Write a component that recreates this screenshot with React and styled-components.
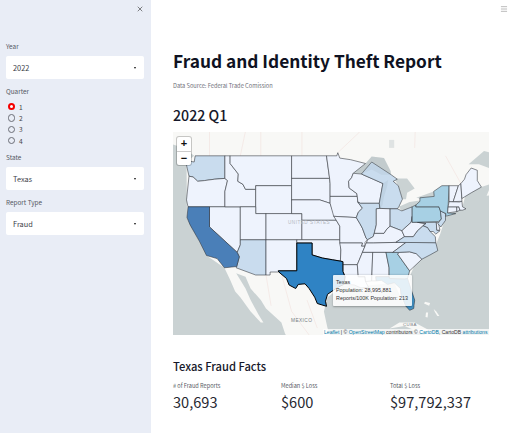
import React from "react";
import styled, { createGlobalStyle } from "styled-components";
import { X, Menu } from "lucide-react";

const font = `"Noto Sans CJK JP", "Noto Sans", sans-serif`;

const Global = createGlobalStyle`
  html, body { margin: 0; padding: 0; background: #fff; }
  body { font-family: ${font}; color: #262730; }
  #root { width: 512px; height: 433px; overflow: hidden; }
`;

const Page = styled.div`
  display: flex;
  width: 512px;
  height: 433px;
  overflow: hidden;
`;

const Sidebar = styled.aside`
  width: 151px;
  flex: none;
  box-sizing: border-box;
  background: #e9edf6;
  padding: 5px 7px 0 6px;
  display: flex;
  flex-direction: column;
`;

const CloseRow = styled.div`
  display: flex;
  justify-content: flex-end;
  height: 37px;
  color: #333;
`;

const Field = styled.div`
  display: flex;
  flex-direction: column;
  margin-bottom: ${(p) => p.$gap || 8}px;
`;

const Label = styled.div`
  font-size: 6.4px;
  line-height: 10px;
  height: 10px;
  color: #555863;
  margin-bottom: 4px;
`;

const Select = styled.div`
  height: 23px;
  background: #fff;
  border-radius: 2px;
  display: flex;
  align-items: center;
  justify-content: space-between;
  padding: 0 8px 0 7px;
  font-size: 7.4px;
  color: #3a3c47;
`;

const Caret = styled.span`
  width: 0;
  height: 0;
  border-left: 1.8px solid transparent;
  border-right: 1.8px solid transparent;
  border-top: 2px solid #111;
`;

const RadioGroup = styled.div`
  display: flex;
  flex-direction: column;
  gap: 4.4px;
  padding: 2px 0 0 1.5px;
`;

const RadioRow = styled.div`
  display: flex;
  align-items: center;
  gap: 4px;
  height: 7px;
  font-size: 6.6px;
  color: #444;
`;

const RadioDot = styled.span`
  box-sizing: border-box;
  width: 7.4px;
  height: 7.4px;
  border-radius: 50%;
  background: ${(p) => (p.$on ? "#fff" : "transparent")};
  border: ${(p) => (p.$on ? "2.2px solid #f40000" : "0.7px solid #6b6d76")};
`;

const Main = styled.main`
  flex: 1;
  position: relative;
  box-sizing: border-box;
  padding: 47px 23px 0 22px;
  min-width: 0;
`;

const HamburgerSlot = styled.div`
  position: absolute;
  top: 5px;
  right: 4px;
  color: #9a9a9a;
  display: flex;
`;

const Title = styled.h1`
  margin: 0;
  font-size: 17.3px;
  line-height: 28px;
  font-weight: 700;
  color: #0f1222;
  white-space: nowrap;
`;

const Caption = styled.p`
  margin: 6px 0 0;
  font-size: 5.7px;
  line-height: 10px;
  color: #6f717b;
`;

const Heading = styled.h2`
  margin: 13px 0 6px;
  font-size: 14.2px;
  line-height: 22px;
  font-weight: 500;
  color: #16182a;
`;

const MapFrame = styled.div`
  position: relative;
  width: 316px;
  height: 203px;
  overflow: hidden;
  background: #cad2d3;
`;

const MapSvg = styled.svg`
  display: block;
  font-family: "Liberation Sans", sans-serif;
`;

const ZoomControl = styled.div`
  position: absolute;
  left: 4px;
  top: 5px;
  width: 14px;
  display: flex;
  flex-direction: column;
  background: #fff;
  border-radius: 2px;
  box-shadow: 0 0 0 1px rgba(0, 0, 0, 0.2);
`;

const ZoomButton = styled.div`
  height: 13.5px;
  display: flex;
  align-items: center;
  justify-content: center;
  font-family: "Liberation Sans", sans-serif;
  font-size: 11px;
  font-weight: 700;
  color: #111;
  line-height: 1;
  border-bottom: ${(p) => (p.$last ? "none" : "0.5px solid #ccc")};
`;

const Tooltip = styled.div`
  position: absolute;
  left: 160px;
  top: 143px;
  width: 79px;
  height: 31px;
  box-sizing: border-box;
  padding: 3px 3px;
  background: rgba(255, 255, 255, 0.86);
  box-shadow: 0 0.5px 2px rgba(0, 0, 0, 0.3);
  border-radius: 1px;
  font-family: "Liberation Sans", sans-serif;
  font-size: 5.4px;
  line-height: 8.2px;
  color: #333;
  white-space: nowrap;
`;

const Attribution = styled.div`
  position: absolute;
  right: 0;
  bottom: 0;
  padding: 0 1.5px;
  height: 6.5px;
  line-height: 6.5px;
  background: rgba(255, 255, 255, 0.75);
  font-family: "Liberation Sans", sans-serif;
  font-size: 5.1px;
  color: #333;
  white-space: nowrap;
`;

const AttrLink = styled.span`
  color: #0078a8;
`;

const SubHeading = styled.h3`
  margin: 22px 0 6px;
  font-size: 11.2px;
  line-height: 18px;
  font-weight: 500;
  color: #16182a;
`;

const Metrics = styled.div`
  display: grid;
  grid-template-columns: 108px 109px 1fr;
`;

const Metric = styled.div`
  display: flex;
  flex-direction: column;
`;

const MetricLabel = styled.div`
  font-size: 5.6px;
  line-height: 10px;
  color: #555863;
`;

const MetricValue = styled.div`
  font-size: 14.6px;
  line-height: 22px;
  color: #262730;
`;

/* ---- map drawing ---- */
const merc = (lat) => Math.log(Math.tan(Math.PI / 4 + (lat * Math.PI) / 360));
const px = (lon, lat) => [
  (188 + (lon + 124.2) * 5.13 - 173).toFixed(1),
  (155 + (0.9865 - merc(lat)) * 292 - 132).toFixed(1),
];
const path = (s) => {
  const n = s.trim().split(/[\s;]+/).map((p) => p.split(",").map(Number));
  return "M" + n.map(([a, b]) => px(a, b).join(" ")).join("L") + "Z";
};

const BASE = "#eef3fd";
const LIGHT = "#c9dcee";
const MID = "#a7d0e4";

const STATES = [
  ["WA", LIGHT, "-124.7,48.4 -123,48.2 -122.8,49 -117,49 -117,46 -119,45.9 -121,45.7 -122.3,45.6 -123.2,46.2 -124,46.3"],
  ["OR", BASE, "-124.2,42 -120,42 -117,42 -117,44.2 -116.5,45.7 -117,46 -119,45.9 -121,45.7 -122.3,45.6 -123.2,46.2 -124,46.3 -124.5,43"],
  ["NV", BASE, "-120,42 -114,42 -114,36.2 -114.6,35 -120,39"],
  ["ID", BASE, "-117,49 -116,49 -116,48 -114.4,46.6 -114.5,45.6 -113.5,45.2 -113,44.5 -111,44.5 -111,42 -117,42 -117,44.2 -116.5,45.7 -117,46"],
  ["MT", BASE, "-116,49 -104,49 -104,45 -111,45 -111,44.5 -113,44.5 -113.5,45.2 -114.5,45.6 -114.4,46.6 -116,48"],
  ["WY", BASE, "-111,45 -104,45 -104,41 -111,41"],
  ["UT", BASE, "-114,42 -111,42 -111,41 -109,41 -109,37 -114,37"],
  ["CO", BASE, "-109,41 -102,41 -102,37 -109,37"],
  ["AZ", LIGHT, "-114,37 -109,37 -109,31.3 -111,31.3 -114.8,32.5 -114.7,32.7 -114.2,34.3 -114.6,35 -114,36.2"],
  ["NM", BASE, "-109,37 -103,37 -103,32 -106.6,32 -106.5,31.8 -108.2,31.8 -108.2,31.3 -109,31.3"],
  ["ND", BASE, "-104,49 -97.2,49 -96.6,46 -104,46"],
  ["SD", BASE, "-104,46 -96.6,46 -96.5,45.3 -96.5,42.5 -98.5,43 -104,43"],
  ["NE", BASE, "-104,43 -98.5,43 -96.5,42.5 -95.3,40 -102,40 -102,41 -104,41"],
  ["KS", BASE, "-102,40 -95.3,40 -94.6,39.1 -94.6,37 -102,37"],
  ["OK", BASE, "-103,37 -94.6,37 -94.4,35.4 -94.5,33.6 -96,33.8 -98,34.1 -100,34.6 -100,36.5 -103,36.5"],
  ["MN", BASE, "-97.2,49 -95.2,49 -95,49.4 -94.6,48.7 -92.5,48.5 -89.6,48 -92,46.7 -92.3,46.1 -92.9,45.6 -92.8,44.7 -91.3,43.9 -91.2,43.5 -96.5,43.5 -96.5,45.3 -96.6,46"],
  ["IA", BASE, "-96.5,43.5 -91.2,43.5 -91.1,42.7 -90.2,41.8 -91,41.2 -91.4,40.4 -95.8,40.6 -96.5,42.5"],
  ["MO", BASE, "-95.8,40.6 -91.4,40.4 -90.7,39.5 -90.2,38.8 -89.5,37.3 -89.2,37 -89.7,36.6 -89.7,36 -90.4,36 -90.2,36.5 -94.6,36.5 -94.6,39.1 -95.3,40"],
  ["AR", BASE, "-94.6,36.5 -90.2,36.5 -90.4,36 -89.7,36 -91.2,33 -94,33 -94,33.5 -94.5,33.6 -94.4,35.4"],
  ["LA", BASE, "-94,33 -91.2,33 -91,31 -89.7,31 -89.6,30.2 -89,29.2 -90.5,29.1 -91.8,29.6 -93.8,29.7 -93.6,31 -94,31.9"],
  ["WI", BASE, "-92,46.7 -90.4,46.6 -88.1,45.9 -86.2,45.3 -86.9,42.5 -90.6,42.5 -91.1,42.7 -91.2,43.5 -91.3,43.9 -92.8,44.7 -92.9,45.6 -92.3,46.1"],
  ["IL", LIGHT, "-90.6,42.5 -86.9,42.5 -86.8,41.76 -87.5,41.7 -87.5,39.3 -87.9,38 -88.1,37.5 -89.2,37 -89.5,37.3 -90.2,38.8 -90.7,39.5 -91.4,40.4 -91,41.2 -90.2,41.8 -91.1,42.7"],
  ["MI", LIGHT, "-90.4,46.6 -88.4,48.2 -84.6,46.5 -83.4,45.9 -84.2,45.6 -83.2,45 -82.4,43.1 -83.1,42 -83.4,41.7 -84.8,41.7 -86.8,41.76 -86.9,42.5 -86.2,45.3 -88.1,45.9"],
  ["IN", BASE, "-87.5,41.7 -86.8,41.76 -84.8,41.7 -84.8,39.1 -85.4,38.7 -86,38 -87.9,38 -87.5,39.3"],
  ["OH", LIGHT, "-84.8,41.7 -83.4,41.7 -82.5,41.4 -80.5,42 -80.5,40.6 -80.7,39.7 -81.7,39 -82.5,38.4 -84.8,39.1"],
  ["KY", BASE, "-89.4,36.5 -88,36.5 -83.7,36.6 -82,37.5 -82.5,38.4 -84.8,39.1 -85.4,38.7 -86,38 -87.9,38 -88.1,37.5 -89.2,37"],
  ["TN", BASE, "-90.2,35 -88.2,35 -84.3,35 -81.7,36.6 -83.7,36.6 -88,36.5 -89.5,36.5 -89.7,36"],
  ["MS", BASE, "-90.2,35 -88.2,35 -88.4,30.3 -89.6,30.2 -89.7,31 -91,31 -91.2,33"],
  ["AL", BASE, "-88.2,35 -85.6,35 -85,32.5 -85,31 -87.6,31 -87.5,30.3 -88.4,30.3"],
  ["GA", MID, "-85.6,35 -83.1,35 -83.3,34.7 -81,32 -81.4,30.7 -82,30.6 -84.9,30.7 -85,31 -85,32.5"],
  ["SC", BASE, "-83.1,35 -81,35.1 -79.7,34.8 -78.6,33.9 -81,32 -83.3,34.7"],
  ["NC", LIGHT, "-84.3,35 -83.1,35 -81,35.1 -79.7,34.8 -78.6,33.9 -77,34.6 -75.5,35.3 -75.9,36.55 -81.7,36.6"],
  ["VA", LIGHT, "-83.7,36.6 -75.9,36.55 -76,37.5 -77,38.3 -77.5,38.9 -78.4,39.2 -79.5,38.4 -80.3,37.5 -82,37.5"],
  ["WV", BASE, "-82,37.5 -80.3,37.5 -79.5,38.4 -78.4,39.2 -77.8,39.5 -79.5,39.7 -80.5,39.7 -80.5,40.6 -80.7,39.7 -81.7,39 -82.5,38.4"],
  ["MD", LIGHT, "-79.5,39.7 -75.8,39.7 -75.7,38.5 -75.1,38.4 -75.9,37.9 -76.4,38.3 -77,38.3 -77.5,38.9 -78.4,39.2 -77.8,39.5"],
  ["DE", BASE, "-75.8,39.7 -75.4,39.7 -75.1,38.5 -75.7,38.5"],
  ["PA", MID, "-80.5,42 -79.76,42.27 -79.8,42 -75.3,42 -75,41.4 -74.8,40.2 -75.4,39.8 -80.5,39.7"],
  ["NJ", LIGHT, "-75,41.4 -74,41 -74,40 -74.9,39 -75.5,39.5 -74.8,40.2"],
  ["NY", MID, "-79.8,42 -75.3,42 -75,41.4 -73.9,41 -74,40.6 -72,41 -73.6,41.1 -73.5,42 -73.3,45 -74.7,45 -76.3,44.2 -76.2,43.5 -79,43.3 -79,42.8 -79.76,42.27"],
  ["CT", BASE, "-73.6,41.1 -73.5,42 -71.8,42 -71.8,41.3"],
  ["RI", BASE, "-71.8,42 -71.4,42 -71.2,41.5 -71.8,41.3"],
  ["MA", BASE, "-73.5,42 -73.3,42.75 -71.3,42.7 -70.8,42.8 -70.7,42 -70,41.7 -70.7,41.5 -71.2,41.5 -71.4,42"],
  ["VT", BASE, "-73.3,42.75 -72.5,42.75 -71.5,45 -73.3,45"],
  ["NH", BASE, "-72.5,42.75 -70.8,42.8 -71,45.3 -71.5,45"],
  ["ME", BASE, "-71,45.3 -70.8,43.2 -69,44 -67,44.8 -67.8,45.7 -67.8,47.1 -69,47.4 -70,46.5 -70.3,45.9"],
  ["CA", "#4a7fb8", "-124.2,42 -120,42 -120,39 -114.6,35 -114.2,34.3 -114.7,32.7 -117.1,32.5 -118.5,34 -120.6,34.5 -122,36.8 -123.8,39.3 -124.4,40.4"],
  ["FL", "#4292c6", "-87.6,31 -85,31 -84.9,30.7 -82,30.6 -81.4,30.7 -80,27 -80.2,25.5 -81,25.2 -81.8,26 -82.7,28 -82.8,29 -84,30 -85.3,29.7 -86.5,30.4 -87.5,30.3"],
];

const TEXAS = "-106.6,32 -103,32 -103,36.5 -100,36.5 -100,34.6 -98,34.1 -96,33.8 -94.5,33.6 -94,33.5 -94,31.9 -93.6,31 -93.8,29.7 -95,29.2 -97,28 -97.4,26.8 -97.2,25.9 -99,26.4 -99.5,27.5 -100.6,29 -101.4,29.8 -102.7,29.7 -103.2,29 -104.5,29.6 -105,30.7 -106.5,31.8";

const CANADA = "-130,60 -60,60 -60,48.6 -64,49.2 -66.5,49.6 -69.5,47.9 -67.5,47.9 -64.8,47.2 -64,46 -61,46 -60,46.5 -60,44 -66,43.6 -65,45.3 -67,44.8 -70,44 -70.7,42 -74,40.5 -75,38 -76,36 -80,33 -81,31 -80,26 -82,26 -84,30 -89,29.5 -94,29.5 -97,27.5 -97.7,25 -97,22 -96,19 -104,19 -105.3,21 -106,23 -109,25.5 -110,27 -112,29 -113,31 -114.8,31.6 -113,29 -112,27 -110.5,24.5 -109.5,23 -110,23 -112,25 -114,27.5 -115,28.5 -116,30.5 -117.1,32.5 -120.6,34.5 -124.4,40.4 -124.5,48.2 -123,49 -125,50 -130,51";
const CUBA = "-84.9,21.9 -83,23 -80,23 -77,21.5 -74.5,20.2 -77.5,19.9 -78,20.8 -82,22.4";
const BAHAMA_A = "-78,26.7 -77,26.5 -77.2,26 -78.2,26.4";
const BAHAMA_B = "-77.8,24.8 -77.4,24.8 -77.5,23.9 -77.9,24";
const BAHAMA_C = "-76.3,25.4 -75.8,25 -75.2,24.2 -75.6,24.2 -76.1,24.9";

const LAKES = [
  "-92,46.7 -89.6,48 -88.4,48.9 -86,48.7 -84.7,47 -84.6,46.5 -86.5,46.5 -88.4,47.2 -90.4,46.6",
  "-84,46 -81.5,46 -80,44.6 -81.5,44 -81.7,43.1 -82.4,43.1 -83.2,45",
  "-83.1,42 -81,42.7 -79,42.9 -79,42.6 -80.5,42 -82.5,41.4",
  "-79.7,43.3 -76.3,44.2 -76.2,43.5 -79,43.2",
  "-86.2,45.3 -85.2,45.8 -85.4,44.8 -86,43.5 -86.3,42.2 -86.9,41.7 -86.9,42.5",
];
const LAKE_NIPIGON = "-85,51 -84,51 -84,50 -85,50";

const BORDER_LINES = [
  "-120,49 -120,60",
  "-114,49 -110,60",
  "-110,49 -110,60",
  "-102,49 -102,60",
  "-95,49.4 -89,53",
  "-80,50 -79.5,60",
  "-71,45.3 -74,49",
  "-106,31.5 -104,25 -100,20",
  "-109,31.3 -108,26",
  "-101,27 -99,22",
];

const GeoMap = () => (
  <MapSvg width="316" height="203" viewBox="0 0 316 203">
    <rect width="316" height="203" fill="#cad2d3" />
    <path d={path(CANADA)} fill="#f8f8f6" />
    <path d={path(CUBA)} fill="#f8f8f6" />
    <path d={path(BAHAMA_A)} fill="#f8f8f6" />
    <path d={path(BAHAMA_B)} fill="#f8f8f6" />
    <path d={path(BAHAMA_C)} fill="#f8f8f6" />
    {BORDER_LINES.map((d) => (
      <path key={d} d={path(d).replace("Z", "")} fill="none" stroke="#f0dcd8" strokeWidth="0.5" />
    ))}
    {LAKES.slice(0, 4).map((d) => (
      <path key={d} d={path(d)} fill="#cad2d3" />
    ))}
    <path d={path(LAKE_NIPIGON)} fill="#dfe3e3" />
    {STATES.map(([id, fill, d]) => (
      <path key={id} d={path(d)} fill={fill} stroke="#2a2d33" strokeWidth="0.55" strokeLinejoin="round" />
    ))}
    <path d={path(LAKES[0])} fill="#8a9aa8" fillOpacity="0.12" />
    <path d={path(LAKES[4])} fill="#8a9aa8" fillOpacity="0.14" />
    <path d={path(TEXAS)} fill="#2f83c4" stroke="#000" strokeWidth="1" strokeLinejoin="round" />
    <text x="115" y="92" fontSize="4.6" letterSpacing="0.5" fill="#b4b8c0">UNITED STATES</text>
    <text x="118" y="190" fontSize="4.8" letterSpacing="0.4" fill="#777c82">MEXICO</text>
    <text x="230" y="194" fontSize="4.4" letterSpacing="0.4" fill="#777c82">CUBA</text>
  </MapSvg>
);

const App = () => (
  <Page>
    <Global />
    <Sidebar>
      <CloseRow>
        <X size={8} strokeWidth={1.8} />
      </CloseRow>
      <Field>
        <Label>Year</Label>
        <Select>
          2022
          <Caret />
        </Select>
      </Field>
      <Field $gap={9}>
        <Label>Quarter</Label>
        <RadioGroup>
          {["1", "2", "3", "4"].map((q) => (
            <RadioRow key={q}>
              <RadioDot $on={q === "1"} />
              {q}
            </RadioRow>
          ))}
        </RadioGroup>
      </Field>
      <Field>
        <Label>State</Label>
        <Select>
          Texas
          <Caret />
        </Select>
      </Field>
      <Field>
        <Label>Report Type</Label>
        <Select>
          Fraud
          <Caret />
        </Select>
      </Field>
    </Sidebar>
    <Main>
      <HamburgerSlot>
        <Menu size={8} strokeWidth={2} />
      </HamburgerSlot>
      <Title>Fraud and Identity Theft Report</Title>
      <Caption>Data Source: Federal Trade Comission</Caption>
      <Heading>2022 Q1</Heading>
      <MapFrame>
        <GeoMap />
        <ZoomControl>
          <ZoomButton>+</ZoomButton>
          <ZoomButton $last>−</ZoomButton>
        </ZoomControl>
        <Tooltip>
          Texas
          <br />
          Population: 28,995,881
          <br />
          Reports/100K Population: 213
        </Tooltip>
        <Attribution>
          <AttrLink>Leaflet</AttrLink> | © <AttrLink>OpenStreetMap</AttrLink> contributors © <AttrLink>CartoDB</AttrLink>, CartoDB <AttrLink>attributions</AttrLink>
        </Attribution>
      </MapFrame>
      <SubHeading>Texas Fraud Facts</SubHeading>
      <Metrics>
        <Metric>
          <MetricLabel># of Fraud Reports</MetricLabel>
          <MetricValue>30,693</MetricValue>
        </Metric>
        <Metric>
          <MetricLabel>Median $ Loss</MetricLabel>
          <MetricValue>$600</MetricValue>
        </Metric>
        <Metric>
          <MetricLabel>Total $ Loss</MetricLabel>
          <MetricValue>$97,792,337</MetricValue>
        </Metric>
      </Metrics>
    </Main>
  </Page>
);

export default App;
